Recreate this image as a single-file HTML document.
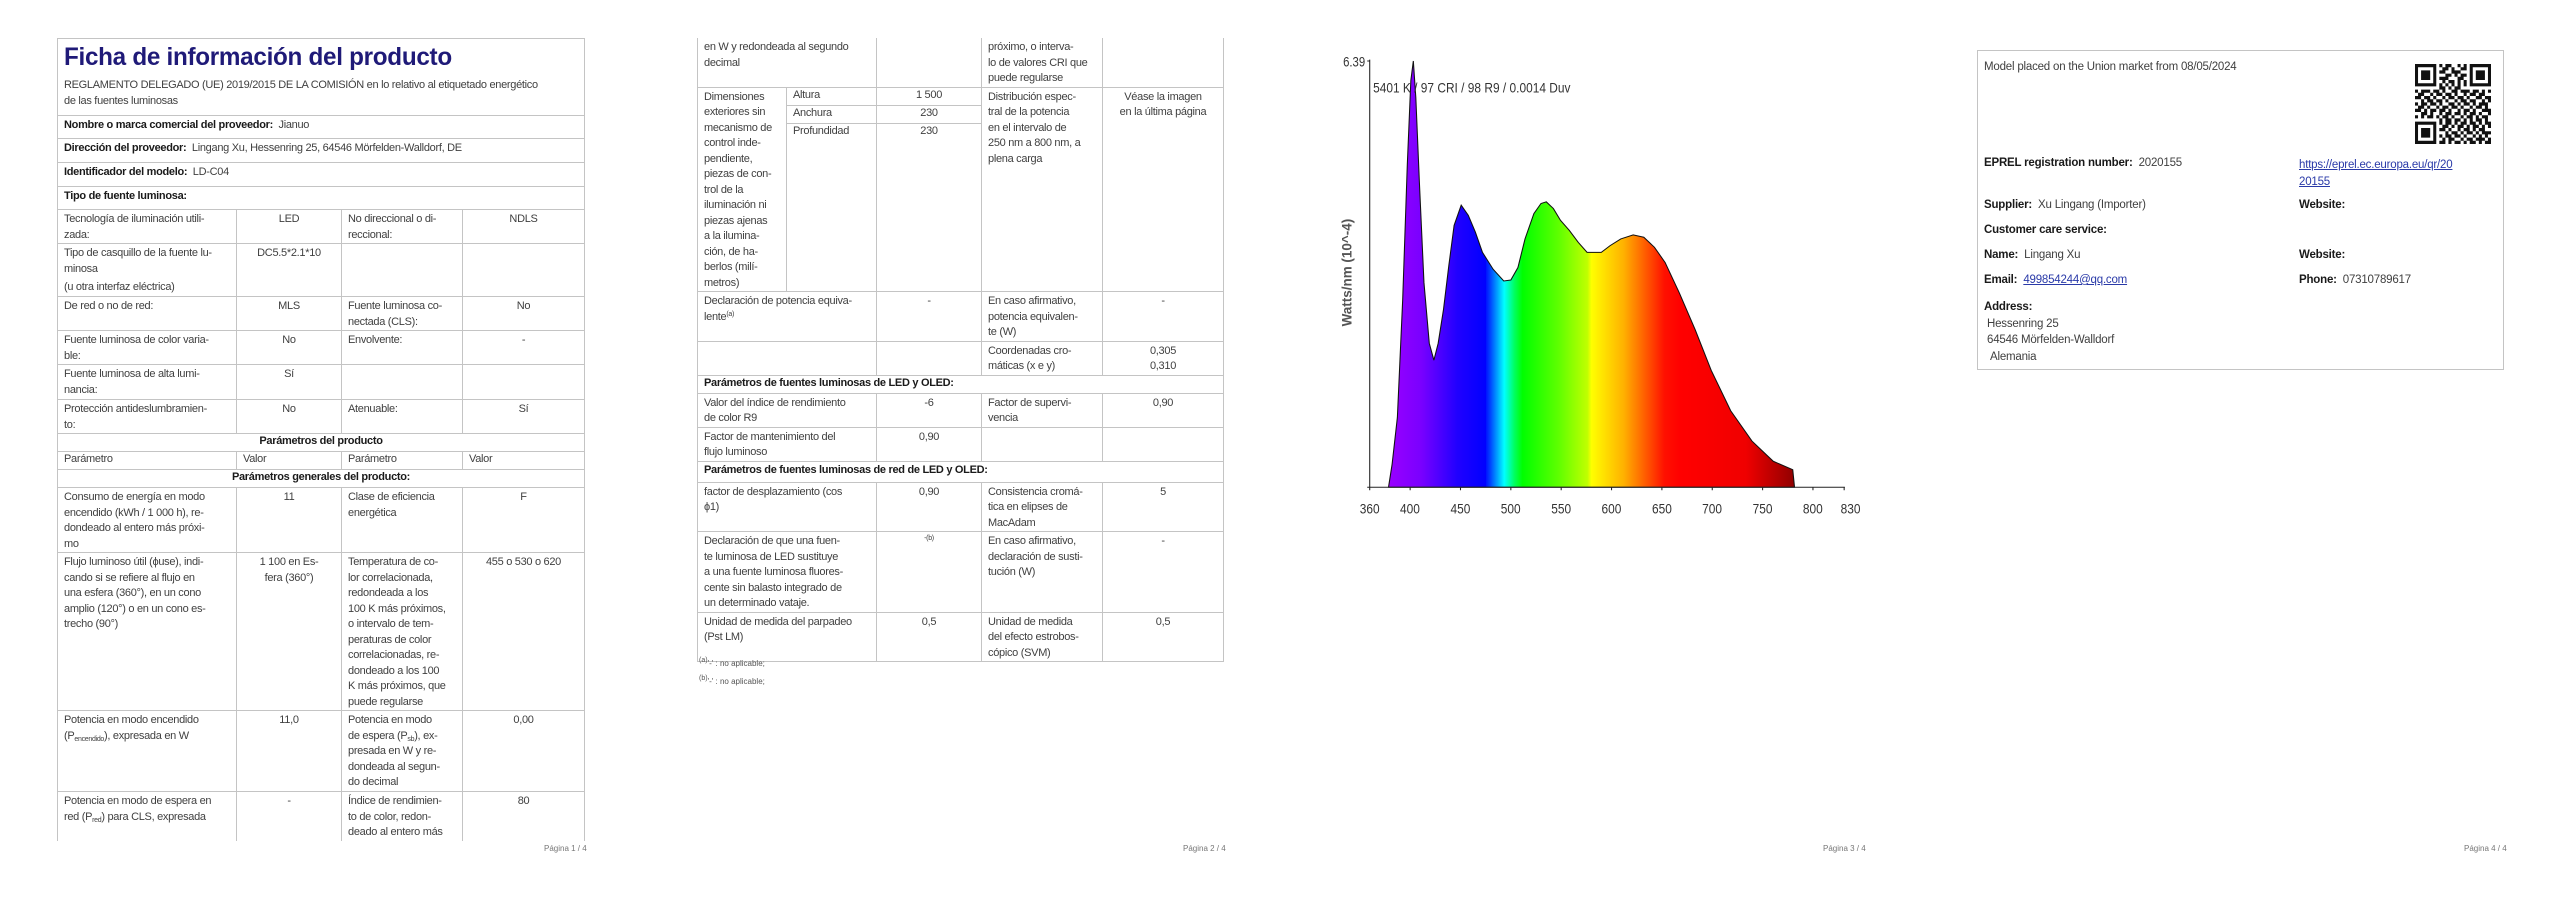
<!DOCTYPE html>
<html><head><meta charset="utf-8">
<style>
*{margin:0;padding:0;box-sizing:border-box}
body{width:2560px;height:905px;background:#fff;position:relative;overflow:hidden;font-family:"Liberation Sans",sans-serif;color:#404040}
table{position:absolute;border-collapse:collapse;table-layout:fixed;font-size:11px;letter-spacing:-0.3px}
td{border:1px solid #c4c4c4;vertical-align:top;padding:2px 6px 0 6px;line-height:15.5px;white-space:nowrap;overflow:hidden}
td.c{text-align:center}
b{color:#1a1a1a;font-weight:bold}
.pg{position:absolute;font-size:8px;color:#777;top:844px}
sub{font-size:7px;vertical-align:-2px;line-height:0}
sup{font-size:7px;vertical-align:4px;line-height:0}
.p4{position:absolute;font-size:11.5px;white-space:nowrap;letter-spacing:-0.2px}
.lnk{color:#2a3aa8;text-decoration:underline}
</style></head><body>

<!-- PAGE 1 -->
<table style="left:57px;top:38px;width:527px">
<colgroup><col style="width:179px"><col style="width:105px"><col style="width:121px"><col style="width:122px"></colgroup>
<tr style="height:77px"><td colspan="4" style="padding-top:0"><div style="color:#1f1a78;font-weight:bold;font-size:25px;letter-spacing:-0.3px;line-height:30px;margin-top:3px;transform:scaleX(0.97);transform-origin:left">Ficha de información del producto</div><div style="margin-top:6px">REGLAMENTO DELEGADO (UE) 2019/2015 DE LA COMISIÓN en lo relativo al etiquetado energético<br>de las fuentes luminosas</div></td></tr>
<tr style="height:23px"><td colspan="4"><b>Nombre o marca comercial del proveedor:</b>&nbsp; Jianuo</td></tr>
<tr style="height:24px"><td colspan="4"><b>Dirección del proveedor:</b>&nbsp; Lingang Xu, Hessenring 25, 64546 Mörfelden-Walldorf, DE</td></tr>
<tr style="height:24px"><td colspan="4"><b>Identificador del modelo:</b>&nbsp; LD-C04</td></tr>
<tr style="height:23px"><td colspan="4"><b>Tipo de fuente luminosa:</b></td></tr>
<tr style="height:34px"><td>Tecnología de iluminación utili-<br>zada:</td><td class="c">LED</td><td>No direccional o di-<br>reccional:</td><td class="c">NDLS</td></tr>
<tr style="height:53px"><td>Tipo de casquillo de la fuente lu-<br>minosa<br><span style="display:block;margin-top:3px">(u otra interfaz eléctrica)</span></td><td class="c">DC5.5*2.1*10</td><td></td><td></td></tr>
<tr style="height:34px"><td>De red o no de red:</td><td class="c">MLS</td><td>Fuente luminosa co-<br>nectada (CLS):</td><td class="c">No</td></tr>
<tr style="height:33px"><td>Fuente luminosa de color varia-<br>ble:</td><td class="c">No</td><td>Envolvente:</td><td class="c">-</td></tr>
<tr style="height:35px"><td>Fuente luminosa de alta lumi-<br>nancia:</td><td class="c">Sí</td><td></td><td></td></tr>
<tr style="height:33px"><td>Protección antideslumbramien-<br>to:</td><td class="c">No</td><td>Atenuable:</td><td class="c">Sí</td></tr>
<tr style="height:18px"><td colspan="4" class="c" style="padding-top:0"><b>Parámetros del producto</b></td></tr>
<tr style="height:18px"><td style="padding-top:0">Parámetro</td><td style="padding-top:0">Valor</td><td style="padding-top:0">Parámetro</td><td style="padding-top:0">Valor</td></tr>
<tr style="height:18px"><td colspan="4" class="c" style="padding-top:0"><b>Parámetros generales del producto:</b></td></tr>
<tr style="height:65px"><td>Consumo de energía en modo<br>encendido (kWh / 1 000 h), re-<br>dondeado al entero más próxi-<br>mo</td><td class="c">11</td><td>Clase de eficiencia<br>energética</td><td class="c">F</td></tr>
<tr style="height:157px"><td>Flujo luminoso útil (ϕuse), indi-<br>cando si se refiere al flujo en<br>una esfera (360°), en un cono<br>amplio (120°) o en un cono es-<br>trecho (90°)</td><td class="c">1 100 en Es-<br>fera (360°)</td><td>Temperatura de co-<br>lor correlacionada,<br>redondeada a los<br>100 K más próximos,<br>o intervalo de tem-<br>peraturas de color<br>correlacionadas, re-<br>dondeado a los 100<br>K más próximos, que<br>puede regularse</td><td class="c">455 o 530 o 620</td></tr>
<tr style="height:81px"><td>Potencia en modo encendido<br>(P<sub>encendido</sub>), expresada en W</td><td class="c">11,0</td><td>Potencia en modo<br>de espera (P<sub>sb</sub>), ex-<br>presada en W y re-<br>dondeada al segun-<br>do decimal</td><td class="c">0,00</td></tr>
<tr style="height:47px"><td style="border-bottom:none">Potencia en modo de espera en<br>red (P<sub>red</sub>) para CLS, expresada</td><td class="c" style="border-bottom:none">-</td><td style="border-bottom:none">Índice de rendimien-<br>to de color, redon-<br>deado al entero más</td><td class="c" style="border-bottom:none">80</td></tr>
</table>
<div class="pg" style="left:544px">Página 1 / 4</div>

<!-- PAGE 2 -->
<table style="left:697px;top:38px;width:526px">
<colgroup><col style="width:89px"><col style="width:90px"><col style="width:105px"><col style="width:121px"><col style="width:121px"></colgroup>
<tr style="height:48px"><td colspan="2" style="border-top:none">en W y redondeada al segundo<br>decimal</td><td style="border-top:none"></td><td style="border-top:none">próximo, o interva-<br>lo de valores CRI que<br>puede regularse</td><td style="border-top:none"></td></tr>
<tr style="height:18px"><td rowspan="3">Dimensiones<br>exteriores sin<br>mecanismo de<br>control inde-<br>pendiente,<br>piezas de con-<br>trol de la<br>iluminación ni<br>piezas ajenas<br>a la ilumina-<br>ción, de ha-<br>berlos (milí-<br>metros)</td><td style="padding-top:0">Altura</td><td class="c" style="padding-top:0">1 500</td><td rowspan="3">Distribución espec-<br>tral de la potencia<br>en el intervalo de<br>250 nm a 800 nm, a<br>plena carga</td><td rowspan="3" class="c">Véase la imagen<br>en la última página</td></tr>
<tr style="height:18px"><td style="padding-top:0">Anchura</td><td class="c" style="padding-top:0">230</td></tr>
<tr style="height:168px"><td style="padding-top:0">Profundidad</td><td class="c" style="padding-top:0">230</td></tr>
<tr style="height:49px"><td colspan="2">Declaración de potencia equiva-<br>lente<sup>(a)</sup></td><td class="c">-</td><td>En caso afirmativo,<br>potencia equivalen-<br>te (W)</td><td class="c">-</td></tr>
<tr style="height:34px"><td colspan="2"></td><td></td><td>Coordenadas cro-<br>máticas (x e y)</td><td class="c">0,305<br>0,310</td></tr>
<tr style="height:18px"><td colspan="5" style="padding-top:0"><b>Parámetros de fuentes luminosas de LED y OLED:</b></td></tr>
<tr style="height:33px"><td colspan="2">Valor del índice de rendimiento<br>de color R9</td><td class="c">-6</td><td>Factor de supervi-<br>vencia</td><td class="c">0,90</td></tr>
<tr style="height:34px"><td colspan="2">Factor de mantenimiento del<br>flujo luminoso</td><td class="c">0,90</td><td></td><td></td></tr>
<tr style="height:21px"><td colspan="5" style="padding-top:1px"><b>Parámetros de fuentes luminosas de red de LED y OLED:</b></td></tr>
<tr style="height:47px"><td colspan="2">factor de desplazamiento (cos<br>ϕ1)</td><td class="c">0,90</td><td>Consistencia cromá-<br>tica en elipses de<br>MacAdam</td><td class="c">5</td></tr>
<tr style="height:80px"><td colspan="2">Declaración de que una fuen-<br>te luminosa de LED sustituye<br>a una fuente luminosa fluores-<br>cente sin balasto integrado de<br>un determinado vataje.</td><td class="c"><sup>-(b)</sup></td><td>En caso afirmativo,<br>declaración de susti-<br>tución (W)</td><td class="c">-</td></tr>
<tr style="height:48px"><td colspan="2">Unidad de medida del parpadeo<br>(Pst LM)</td><td class="c">0,5</td><td>Unidad de medida<br>del efecto estrobos-<br>cópico (SVM)</td><td class="c">0,5</td></tr>
</table>
<div style="position:absolute;left:699px;top:659px;font-size:8px;color:#555"><sup>(a)</sup>'-' : no aplicable;</div>
<div style="position:absolute;left:699px;top:677px;font-size:8px;color:#555"><sup>(b)</sup>'-' : no aplicable;</div>
<div class="pg" style="left:1183px">Página 2 / 4</div>

<!-- PAGE 3 chart -->
<svg style="position:absolute;left:1330px;top:30px" width="556" height="500" viewBox="0 0 1568 1484" preserveAspectRatio="none">
<defs><linearGradient id="sp" gradientUnits="userSpaceOnUse" x1="165" y1="0" x2="1310" y2="0">
<stop offset="0" stop-color="#9a00ff"/><stop offset="0.08" stop-color="#7a00ff"/><stop offset="0.17" stop-color="#2000ff"/><stop offset="0.24" stop-color="#0000ff"/><stop offset="0.235" stop-color="#0010ff"/><stop offset="0.25" stop-color="#0040ff"/><stop offset="0.285" stop-color="#00ffff"/><stop offset="0.31" stop-color="#00ff60"/><stop offset="0.33" stop-color="#00ff00"/><stop offset="0.42" stop-color="#60ff00"/><stop offset="0.49" stop-color="#c0ff00"/><stop offset="0.5" stop-color="#ffff00"/><stop offset="0.58" stop-color="#ffb000"/><stop offset="0.63" stop-color="#ff6000"/><stop offset="0.68" stop-color="#ff1000"/><stop offset="0.72" stop-color="#ff0000"/><stop offset="0.88" stop-color="#f00000"/><stop offset="1" stop-color="#900000"/></linearGradient></defs>
<path d="M165 1357 L175 1290 L190 1150 L205 800 L218 400 L228 150 L235 92 L242 200 L252 450 L265 750 L280 930 L293 980 L305 930 L320 830 L335 700 L350 580 L370 520 L390 550 L410 600 L430 660 L460 710 L490 745 L510 742 L530 705 L550 620 L575 545 L595 515 L610 510 L630 530 L650 565 L675 595 L700 630 L725 660 L765 660 L790 640 L820 620 L855 608 L885 615 L915 645 L945 690 L985 780 L1030 890 L1075 1010 L1130 1130 L1190 1220 L1250 1280 L1305 1305 L1310 1357 Z" fill="url(#sp)" stroke="#111" stroke-width="3"/>
<line x1="112" y1="88" x2="112" y2="1358" stroke="#222" stroke-width="3"/>
<line x1="105" y1="92" x2="112" y2="92" stroke="#222" stroke-width="3"/>
<line x1="105" y1="1357" x2="1452" y2="1357" stroke="#222" stroke-width="3"/>
<g stroke="#222" stroke-width="3">
<line x1="112" y1="1357" x2="112" y2="1366"/><line x1="226" y1="1357" x2="226" y2="1366"/><line x1="368" y1="1357" x2="368" y2="1366"/><line x1="510" y1="1357" x2="510" y2="1366"/><line x1="652" y1="1357" x2="652" y2="1366"/><line x1="794" y1="1357" x2="794" y2="1366"/><line x1="936" y1="1357" x2="936" y2="1366"/><line x1="1078" y1="1357" x2="1078" y2="1366"/><line x1="1220" y1="1357" x2="1220" y2="1366"/><line x1="1362" y1="1357" x2="1362" y2="1366"/><line x1="1450" y1="1357" x2="1450" y2="1366"/></g>
<g font-family="Liberation Sans" font-size="42" fill="#333" text-anchor="middle" transform="scale(0.8,1)">
<text x="140" y="1435">360</text><text x="282" y="1435">400</text><text x="460" y="1435">450</text><text x="637" y="1435">500</text><text x="815" y="1435">550</text><text x="992" y="1435">600</text><text x="1170" y="1435">650</text><text x="1347" y="1435">700</text><text x="1525" y="1435">750</text><text x="1702" y="1435">800</text><text x="1835" y="1435">830</text>
<text x="975" y="1530" font-size="42">Wavelength (nm)</text>
<text x="85" y="108" font-size="40">6.39</text>
<text x="152" y="186" font-size="42" text-anchor="start">5401 K / 97 CRI / 98 R9 / 0.0014 Duv</text>
</g>
<text transform="translate(60,720) rotate(-90)" font-family="Liberation Sans" font-weight="bold" font-size="40" fill="#555" text-anchor="middle">Watts/nm (10^-4)</text>
</svg>
<div class="pg" style="left:1823px">Página 3 / 4</div>

<!-- PAGE 4 -->
<div style="position:absolute;left:1977px;top:50px;width:527px;height:320px;border:1px solid #c4c4c4"></div>
<div class="p4" style="left:1984px;top:61px">Model placed on the Union market from 08/05/2024</div>
<svg id="qr" style="position:absolute;left:2415px;top:64px" width="76" height="80" viewBox="0 0 25 25" preserveAspectRatio="none"></svg>
<div class="p4" style="left:1984px;top:157px"><b>EPREL registration number:</b>&nbsp; 2020155</div>
<div class="p4" style="left:2299px;top:157px;line-height:16.5px"><span class="lnk">https://eprel.ec.europa.eu/qr/20</span><br><span class="lnk">20155</span></div>
<div class="p4" style="left:1984px;top:199px"><b>Supplier:</b>&nbsp; Xu Lingang (Importer)</div>
<div class="p4" style="left:2299px;top:199px"><b>Website:</b></div>
<div class="p4" style="left:1984px;top:224px"><b>Customer care service:</b></div>
<div class="p4" style="left:1984px;top:249px"><b>Name:</b>&nbsp; Lingang Xu</div>
<div class="p4" style="left:2299px;top:249px"><b>Website:</b></div>
<div class="p4" style="left:1984px;top:274px"><b>Email:</b>&nbsp; <span class="lnk">499854244@qq.com</span></div>
<div class="p4" style="left:2299px;top:274px"><b>Phone:</b>&nbsp; 07310789617</div>
<div class="p4" style="left:1984px;top:299px;line-height:16.5px"><b>Address:</b><br>&nbsp;Hessenring 25<br>&nbsp;64546 Mörfelden-Walldorf<br>&nbsp;&nbsp;Alemania</div>
<div class="pg" style="left:2464px">Página 4 / 4</div>

<script>
var rows=["1111111010110010101111111","1000001001101001101000001","1011101011001110001011101","1011101000110101101011101","1011101011100011001011101","1000001001011010101000001","1111111010101010101111111","0000000011010110000000000","1011101101001101110110101","0110010110110100101101100","1101101001011011010011011","0010110110100101101100101","1011011010011010110101110","0110100101101101001011010","1101011011010010110100111","0011010010110110101101001","1010110101101001011010110","0000000010110110101011010","1111111010110101101101011","1000001001101011010110101","1011101011010010110101100","1011101000101101011010111","1011101010110110100101010","1000001001011001011011101","1111111011010110101101011"];
var s="";for(var y=0;y<25;y++)for(var x=0;x<25;x++)if(rows[y][x]=="1")s+="M"+x+" "+y+"h1v1h-1z";
document.getElementById("qr").innerHTML='<path d="'+s+'" fill="#111"/>';
</script>
</body></html>
